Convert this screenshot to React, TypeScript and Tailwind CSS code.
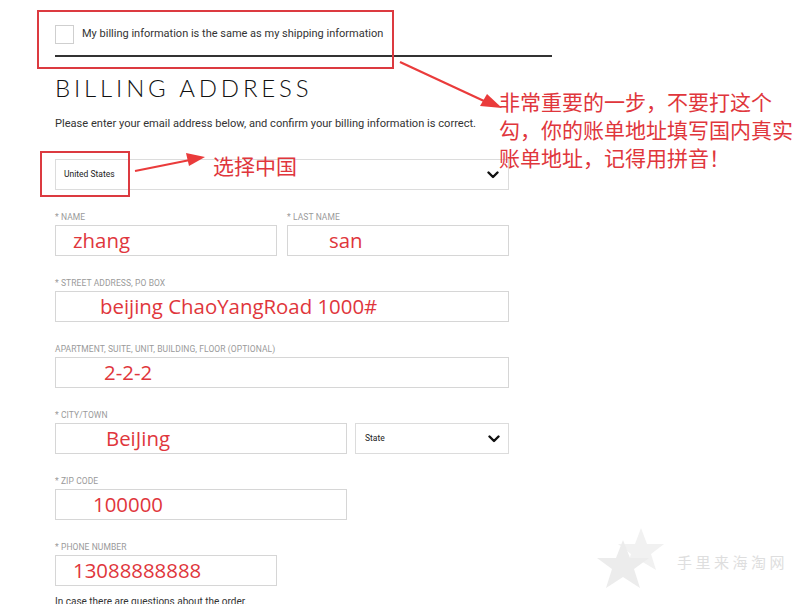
import React from "react";

function Chevron() {
  return (
    <svg width="12" height="8" viewBox="0 0 12 8" className="shrink-0">
      <polyline points="1.5,1.5 6,6 10.5,1.5" fill="none" stroke="#111" strokeWidth="2.4" strokeLinecap="round" strokeLinejoin="round" />
    </svg>
  );
}

function Label({ children }: { children: React.ReactNode }) {
  return (
    <div className="h-[10px] leading-[10px] text-[8.5px] text-[#9a9a9a] uppercase tracking-[0.01em] mb-[3px]" style={{ fontFamily: "Roboto, sans-serif" }}>
      {children}
    </div>
  );
}

function Input({ value, pad, w }: { value: string; pad: string; w: string }) {
  return (
    <div className={`h-[31px] border border-[#d6d6d6] flex items-center ${w}`}>
      <span className={`${pad} text-[20.4px] leading-none text-[#e0363c]`} style={{ fontFamily: "'Open Sans', sans-serif" }}>
        {value}
      </span>
    </div>
  );
}

export default function App() {
  return (
    <div className="relative w-[800px] h-[604px] overflow-hidden bg-white" style={{ fontFamily: "Roboto, sans-serif" }}>
      <div className="pl-[55px] pt-[25px]">
        <div className="flex items-center gap-[8px] h-[19px]">
          <div className="w-[19px] h-[19px] border border-[#cfcfcf] bg-white" />
          <span className="text-[11px] text-[#333]">My billing information is the same as my shipping information</span>
        </div>
        <div className="mt-[11px] w-[497px] h-[2px] bg-[#333]" />
        <h1
          className="mt-[19px] h-[24px] leading-[24px] text-[24px] font-light tracking-[0.16em] text-[#111]"
          style={{ fontFamily: "Lato, sans-serif" }}
        >
          BILLING ADDRESS
        </h1>
        <p className="mt-[18px] text-[11.1px] leading-[12px] text-[#333]">
          Please enter your email address below, and confirm your billing information is correct.
        </p>
        <div className="mt-[29px] w-[454px] h-[31px] border border-[#dcdcdc] flex items-center justify-between pl-[8px] pr-[9px]">
          <span className="text-[8.5px] text-[#222]">United States</span>
          <Chevron />
        </div>

        <div className="mt-[22px] w-[454px] flex gap-[10px]">
          <div className="flex-1">
            <Label>* Name</Label>
            <Input value="zhang" pad="pl-[17px]" w="w-full" />
          </div>
          <div className="flex-1">
            <Label>* Last Name</Label>
            <Input value="san" pad="pl-[41px]" w="w-full" />
          </div>
        </div>

        <div className="mt-[22px]">
          <Label>* Street Address, PO Box</Label>
          <Input value="beijing ChaoYangRoad 1000#" pad="pl-[44px]" w="w-[454px]" />
        </div>

        <div className="mt-[22px]">
          <Label>Apartment, Suite, Unit, Building, Floor (Optional)</Label>
          <Input value="2-2-2" pad="pl-[48px]" w="w-[454px]" />
        </div>

        <div className="mt-[22px] w-[454px] flex gap-[8px] items-end">
          <div className="w-[292px]">
            <Label>* City/Town</Label>
            <Input value="BeiJing" pad="pl-[50px]" w="w-full" />
          </div>
          <div className="flex-1 h-[31px] border border-[#dcdcdc] flex items-center justify-between pl-[9px] pr-[8px]">
            <span className="text-[8.5px] text-[#222]">State</span>
            <Chevron />
          </div>
        </div>

        <div className="mt-[22px]">
          <Label>* Zip Code</Label>
          <Input value="100000" pad="pl-[37px]" w="w-[292px]" />
        </div>

        <div className="mt-[22px]">
          <Label>* Phone Number</Label>
          <Input value="13088888888" pad="pl-[17px]" w="w-[222px]" />
        </div>

        <p className="mt-[10px] text-[10px] leading-[12px] text-[#333]">In case there are questions about the order.</p>
      </div>

      {/* annotation box around checkbox row */}
      <div className="absolute left-[37px] top-[10px] w-[357px] h-[59px] border-2 border-[#dc3a40]" />
      {/* annotation box around country */}
      <div className="absolute left-[40px] top-[151px] w-[90px] h-[46px] border-2 border-[#dc3a40]" />

      {/* arrows */}
      <svg className="absolute left-0 top-0" width="800" height="604" viewBox="0 0 800 604">
        <line x1="400" y1="62" x2="484" y2="101" stroke="#ea3b3b" strokeWidth="2.2" />
        <polygon points="502,108 480,106 487,94" fill="#ea3b3b" />
        <line x1="135" y1="171" x2="190" y2="160" stroke="#ea3b3b" strokeWidth="2.2" />
        <polygon points="205,157 186,153 189,166" fill="#ea3b3b" />
      </svg>

      <div
        className="absolute left-[213px] top-[151px] text-[21px] leading-[28px] text-[#e0363c]"
        style={{ fontFamily: "'Noto Sans CJK SC', sans-serif" }}
      >
        选择中国
      </div>
      <div
        className="absolute left-[499px] top-[87px] w-[300px] text-[21px] leading-[28px] text-[#e0363c]"
        style={{ fontFamily: "'Noto Sans CJK SC', sans-serif" }}
      >
        <div>非常重要的一步，不要打这个</div>
        <div>勾，你的账单地址填写国内真实</div>
        <div>账单地址，记得用拼音！</div>
      </div>

      {/* watermark */}
      <svg className="absolute left-[596px] top-[526px]" width="80" height="70" viewBox="0 0 80 70">
        <polygon points="45,2 51,18 68,18 55,28 60,44 45,35 30,44 35,28 22,18 39,18" fill="#f1f1f1" />
        <polygon points="27,14 34,32 53,32 38,43 44,62 27,51 10,62 16,43 1,32 20,32" fill="#ececec" />
      </svg>
      <div
        className="absolute left-[677px] top-[552px] text-[15px] leading-[20px] tracking-[3.5px] text-[#dedede]"
        style={{ fontFamily: "'Noto Sans CJK SC', serif" }}
      >
        手里来海淘网
      </div>
    </div>
  );
}
